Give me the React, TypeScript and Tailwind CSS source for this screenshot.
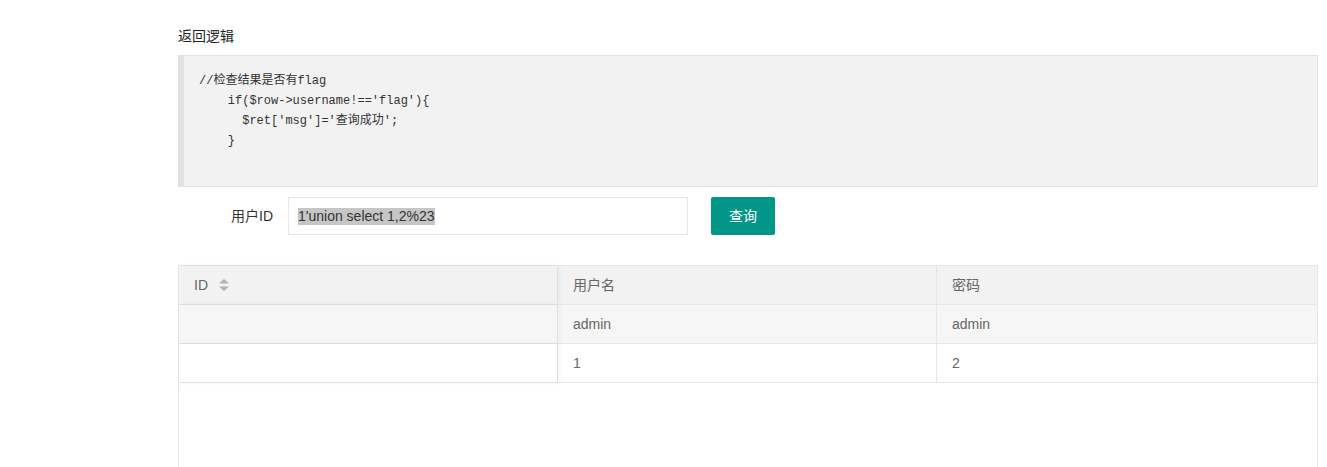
import React from 'react';

const cjk = { fontFamily: '"Liberation Sans", "Noto Sans CJK SC", sans-serif' };

const codeLines = [
  '//检查结果是否有flag',
  '    if($row->username!==\'flag\'){',
  '      $ret[\'msg\']=\'查询成功\';',
  '    }',
  ' ',
];

const rows = [
  { id: '', name: 'admin', pwd: 'admin', bg: 'bg-[#f6f6f6]' },
  { id: '', name: '1', pwd: '2', bg: 'bg-white' },
];

const SortIcon = () => (
  <svg width="12" height="14" viewBox="0 0 12 14" className="ml-[10px]">
    <path d="M6 1 L11 5.5 L1 5.5 Z" fill="#b2b2b2" />
    <path d="M1 8.5 L11 8.5 L6 13 Z" fill="#b2b2b2" />
  </svg>
);

const App = () => {
  return (
    <div className="h-[467px] w-full overflow-hidden bg-white" style={cjk}>
      <div className="ml-[178px] flex h-full w-[1140px] flex-col">
        <h3 className="pt-[27px] text-[14px] leading-[18px] text-[#222]">返回逻辑</h3>

        <pre
          className="mt-[10px] h-[132px] border border-l-[6px] border-[#e2e2e2] bg-[#f2f2f2] px-[15px] pt-[15px] text-[12px] leading-[20px] text-[#333]"
          style={{ fontFamily: '"Liberation Mono", "Noto Sans CJK SC", monospace' }}
        >
          {codeLines.join('\n')}
        </pre>

        <div className="mt-[10px] flex h-[38px] items-center">
          <label className="w-[110px] pr-[15px] text-right text-[14px] text-[#333]">用户ID</label>
          <div className="flex h-[38px] w-[400px] items-center border border-[#e6e6e6] bg-white pl-[9px]">
            <span className="bg-[#c6c6c6] text-[14px] leading-[17px] text-[#333]">1'union select 1,2%23</span>
          </div>
          <button className="ml-[23px] h-[38px] w-[64px] rounded-[2px] bg-[#009688] text-[14px] text-white">
            查询
          </button>
        </div>

        <div className="mt-[30px] flex flex-1 flex-col border-x border-t border-[#e6e6e6] text-[14px] text-[#666]">
          <div className="grid h-[39px] grid-cols-[378px_379px_1fr] border-b border-[#e6e6e6] bg-[#f2f2f2]">
            <div className="relative z-10 flex items-center pl-[15px] shadow-[2px_0_6px_rgba(0,0,0,0.05)]">
              ID
              <SortIcon />
            </div>
            <div className="flex items-center border-l border-[#e6e6e6] pl-[15px]">用户名</div>
            <div className="flex items-center border-l border-[#e6e6e6] pl-[15px]">密码</div>
          </div>
          {rows.map((r, i) => (
            <div key={i} className={`grid h-[39px] grid-cols-[378px_379px_1fr] border-b border-[#e6e6e6] ${r.bg}`}>
              <div className={`relative z-10 flex items-center pl-[15px] shadow-[2px_0_6px_rgba(0,0,0,0.05)] ${r.bg}`}>{r.id}</div>
              <div className="flex items-center border-l border-[#e6e6e6] pl-[15px]">{r.name}</div>
              <div className="flex items-center border-l border-[#e6e6e6] pl-[15px]">{r.pwd}</div>
            </div>
          ))}
          <div className="flex-1 bg-white" />
        </div>
      </div>
    </div>
  );
};

export default App;
